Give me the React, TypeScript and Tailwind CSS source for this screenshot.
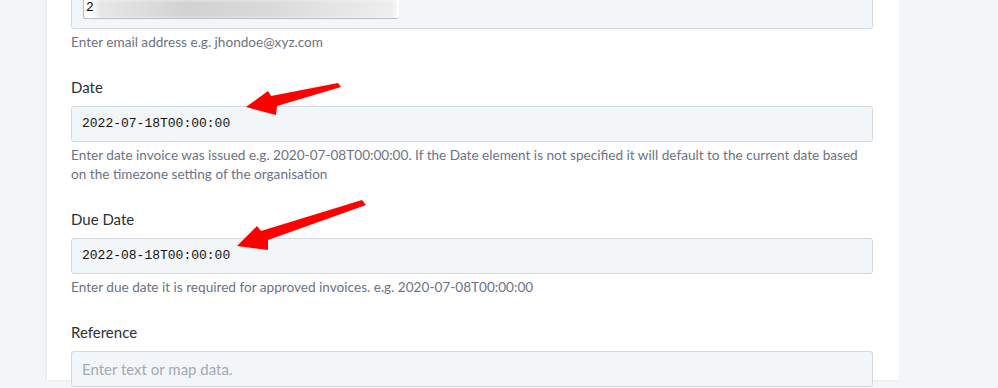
import React from "react";

const fields = [
  {
    label: "Date",
    value: "2022-07-18T00:00:00",
    hint: "Enter date invoice was issued e.g. 2020-07-08T00:00:00. If the Date element is not specified it will default to the current date based on the timezone setting of the organisation",
  },
  {
    label: "Due Date",
    value: "2022-08-18T00:00:00",
    hint: "Enter due date it is required for approved invoices. e.g. 2020-07-08T00:00:00",
  },
];

const Arrow = ({ points }: { points: string }) => (
  <polygon points={points} fill="#ff0000" />
);

const App = () => {
  return (
    <div className="relative w-[998px] h-[388px] overflow-hidden bg-[#f3f6f9] font-['Lato',sans-serif]">
      <div className="ml-[47px] w-[852px] h-full bg-white shadow-[-1px_0_3px_rgba(0,0,0,0.06)] pl-6 pr-[26px]">
        {/* email field, cut off at top */}
        <div className="-mt-2 h-[37px] rounded-[3px] border border-[#d3d8df] bg-[#f3f6f9] pl-[11px]">
          <div className="relative flex h-[26px] w-[316px] items-end overflow-hidden rounded-[3px] border-l border-b border-[#b8bec6] bg-white pl-[2px] pb-[2px] text-[13px] leading-4 text-black font-['Liberation_Mono',monospace]">
            2
            <div className="absolute left-[12px] top-[6px] h-[20px] w-[300px] bg-[linear-gradient(90deg,#e8e8e8,#d2d2d2_30%,#dadada_60%,#efefef)] blur-[2px]" />
          </div>
        </div>
        <p className="mt-1 text-[13.6px] leading-[19px] text-[#6b7385]">
          Enter email address e.g. jhondoe@xyz.com
        </p>

        {fields.map((f) => (
          <div key={f.label} className="mt-[25px]">
            <p className="text-[15px] leading-5 text-[#2b2f36]">{f.label}</p>
            <div className="mt-[9px] flex h-9 items-center rounded-[3px] border border-[#d3d8df] bg-[#f3f6f9] px-[10px] text-[13px] text-[#111] font-['Liberation_Mono',monospace]">
              {f.value}
            </div>
            <p className="mt-1 text-[13.6px] leading-[19px] text-[#6b7385]">
              {f.hint}
            </p>
          </div>
        ))}

        <div className="mt-[25px]">
          <p className="text-[15px] leading-5 text-[#2b2f36]">Reference</p>
          <div className="mt-[9px] flex h-9 items-center rounded-[3px] border border-[#d3d8df] bg-[#f3f6f9] px-[10px] text-[15px] text-[#a4a9b1]">
            Enter text or map data.
          </div>
        </div>
      </div>

      {/* annotation arrows */}
      <svg
        className="absolute left-0 top-0 pointer-events-none"
        width="998"
        height="388"
      >
        <Arrow points="246,107 268,91 271,96 338,83 341,87 277,106 276,115" />
        <Arrow points="237,246 257,226 261,231 362,200 366,205 268,240 268,250" />
      </svg>
    </div>
  );
};

export default App;
